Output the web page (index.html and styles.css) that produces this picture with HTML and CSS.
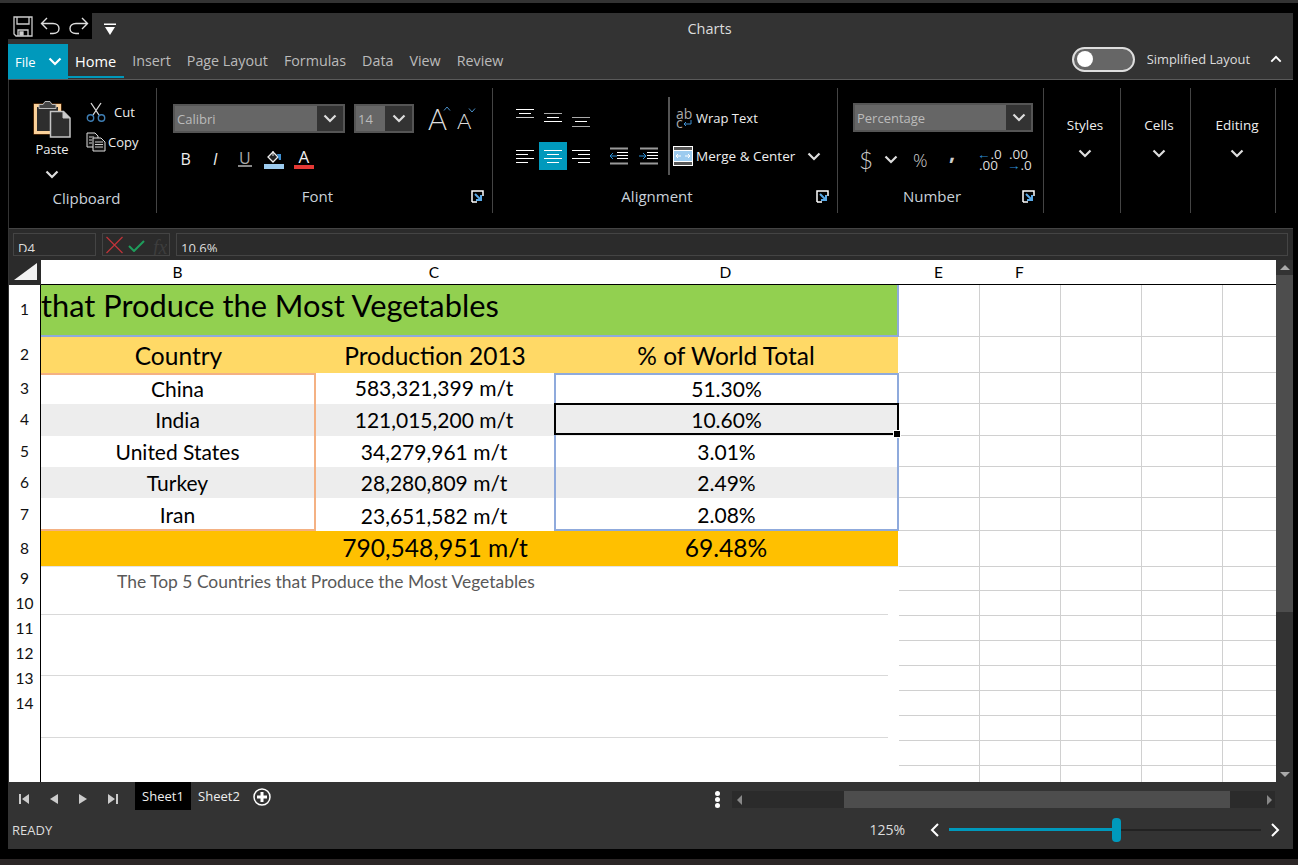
FILE: index.html
```html
<!DOCTYPE html>
<html lang="en">
<head>
  <meta charset="UTF-8">
  <title>Charts</title>
  <link rel="stylesheet" href="styles.css">
</head>
<body>
  <svg class="defs" width="0" height="0">
    <symbol id="chev" viewBox="0 0 14 9"><path d="M1.5 1.5 7 7l5.5-5.5" fill="none" stroke="currentColor" stroke-width="2.2"/></symbol>
    <symbol id="launcher" viewBox="0 0 13 13"><path d="M1 12V1h11v5M1 12h5" fill="none" stroke="#fff" stroke-width="1.5"/><path d="M4 4l5 5M10 5v5H5" fill="none" stroke="#5aa9e6" stroke-width="2"/></symbol>
  </svg>

  <div class="top-strip"></div>

  <div class="window">
    <div class="title-bar">
      <div class="qat">
        <svg class="qat-icon" width="20" height="21" viewBox="0 0 20 21" fill="none" stroke="#ccc" stroke-width="1.3"><path d="M1 1h18v19H3l-2-2z"/><path d="M4 1v7h12V1M5 20v-6h10v6"/><path d="M7 16h3v3H7z" fill="#ccc"/></svg>
        <svg class="qat-icon" width="21" height="18" viewBox="0 0 21 18" fill="none" stroke="#ddd" stroke-width="1.4"><path d="M7 1 1.5 6.5 7 12M2 6.5h11c4 0 6 2.500 6 5s-2 5-6 5H10"/></svg>
        <svg class="qat-icon" width="21" height="18" viewBox="0 0 21 18" fill="none" stroke="#ddd" stroke-width="1.4"><path d="M14 1l5.500 5.500L14 12M19 6.500H8c-4 0-6 2.500-6 5s2 5 6 5h3"/></svg>
      </div>
      <svg class="qat-more" width="12" height="12" viewBox="0 0 12 12"><path d="M0 .5h12V2H0zM1 4h10l-5 8z" fill="#fff"/></svg>
      <div class="doc-title">Charts</div>
    </div>

    <div class="tab-bar">
      <div class="file-tab">File <svg class="chev"><use href="#chev"/></svg></div>
      <a class="tab tab-active">Home</a>
      <a class="tab">Insert</a>
      <a class="tab">Page Layout</a>
      <a class="tab">Formulas</a>
      <a class="tab">Data</a>
      <a class="tab">View</a>
      <a class="tab">Review</a>
      <div class="layout-switch">
        <span class="toggle"><span class="knob"></span></span>
        <span class="switch-label">Simplified Layout</span>
        <svg class="chev chev-up"><use href="#chev"/></svg>
      </div>
    </div>

    <div class="ribbon">
      <section class="group group-clipboard">
        <div class="clipboard-body">
          <div class="paste">
            <svg width="38" height="38" viewBox="0 0 38 38">
              <rect x=".5" y="3.500" width="28" height="31" fill="#8a4b12"/>
              <rect x="2.500" y="5.500" width="24" height="27" fill="#2e2e2e" stroke="#fbd19a" stroke-width="3"/>
              <path d="M6 4.500h4l2-3h5l2 3h4v4H6z" fill="#444" stroke="#bbb"/>
              <path d="M17.500 11.500h13l6.500 6.500v19H17.500z" fill="#2e2e2e" stroke="#c4c4c4" stroke-width="1.500"/>
              <path d="M30 11.500V18h7" fill="#ccc" stroke="#c4c4c4"/>
            </svg>
            <span class="paste-label">Paste</span>
            <svg class="chev"><use href="#chev"/></svg>
          </div>
          <div class="cut-copy">
            <div class="cmd cmd-cut">
              <svg width="20" height="20" viewBox="0 0 20 20" fill="none"><path d="M5 1l8 12M15 1 7 13" stroke="#ddd" stroke-width="1.300"/><circle cx="4.500" cy="16" r="3.200" stroke="#3f7fb5" stroke-width="1.400"/><circle cx="15.500" cy="16" r="3.200" stroke="#3f7fb5" stroke-width="1.400"/></svg>
              <span>Cut</span>
            </div>
            <div class="cmd cmd-copy">
              <svg width="20" height="20" viewBox="0 0 20 20"><path d="M1 1h8l3 3v11H1z" fill="#111" stroke="#ddd"/><path d="M7 6h8l4 4v9H7z" fill="#111" stroke="#ddd"/><path d="M3 5h5M3 8h3M3 11h3M9 10h8M9 12.500h8M9 15h8" stroke="#ccc"/></svg>
              <span>Copy</span>
            </div>
          </div>
        </div>
        <div class="group-label label-clipboard"><span>Clipboard</span></div>
      </section>

      <section class="group group-font">
        <div class="row select-row">
          <div class="select select-font"><span class="select-value">Calibri</span><span class="select-arrow"><svg class="chev"><use href="#chev"/></svg></span></div>
          <div class="select select-size"><span class="select-value">14</span><span class="select-arrow"><svg class="chev"><use href="#chev"/></svg></span></div>
          <span class="grow-a">A<svg width="8" height="5" viewBox="0 0 8 5"><path d="M1 4.500 4 1l3 3.500" fill="none" stroke="#4a90c8"/></svg></span>
          <span class="shrink-a">A<svg width="8" height="5" viewBox="0 0 8 5"><path d="M1 .5 4 4 7 .5" fill="none" stroke="#4a90c8"/></svg></span>
        </div>
        <div class="row format-row">
          <span class="fmt">B</span>
          <span class="fmt fmt-italic">I</span>
          <span class="fmt fmt-under">U</span>
          <span class="fmt">
            <svg width="20" height="22" viewBox="0 0 20 22"><path d="M9 4l5 5-5 5-5-5z" fill="#222" stroke="#eee" stroke-width="1.300"/><path d="M9 3v5" stroke="#eee"/><path d="M13 6h4v6h-2z" fill="#3f8fd0"/><path d="M0 16h20v5H0z" fill="#9ccbef"/></svg>
          </span>
          <span class="fmt fmt-color">A</span>
        </div>
        <div class="group-label label-font"><span>Font</span><svg class="launcher"><use href="#launcher"/></svg></div>
      </section>

      <section class="group group-align">
        <div class="align-body">
          <div class="align-grid">
            <span class="slot"><svg width="18" height="28" viewBox="0 0 18 28" stroke="#fff"><path d="M0 9.500h18M3 13.500h12"/><path d="M0 17.500h18" stroke="#ccc"/></svg></span>
            <span class="slot"><svg width="18" height="28" viewBox="0 0 18 28" stroke="#fff"><path d="M0 13.500h18" stroke="#aaa"/><path d="M3 17.500h12"/><path d="M0 21.500h18"/></svg></span>
            <span class="slot"><svg width="18" height="28" viewBox="0 0 18 28" stroke="#fff"><path d="M0 17.500h18" stroke="#aaa"/><path d="M3 21.500h12"/><path d="M0 26.500h18" stroke="#aaa"/></svg></span>
            <span class="slot slot-gap"></span>
            <span class="slot"><svg width="18" height="28" viewBox="0 0 18 28" stroke="#fff"><path d="M0 8.500h18M0 12.500h12M0 16.500h18M0 20.500h12"/></svg></span>
            <span class="slot slot-on"><svg width="18" height="28" viewBox="0 0 18 28" stroke="#fff"><path d="M0 8.500h18M3 12.500h12M0 16.500h18M3 20.500h12"/></svg></span>
            <span class="slot"><svg width="18" height="28" viewBox="0 0 18 28" stroke="#fff"><path d="M0 8.500h18M6 12.500h12M0 16.500h18M6 20.500h12"/></svg></span>
            <span class="indents">
              <svg width="20" height="18" viewBox="0 0 20 18"><path d="M1 1.500h18M1 16.500h18" stroke="#999" stroke-width="2"/><path d="M8 5.500h11M8 8.500h11M8 11.500h11" stroke="#fff"/><path d="M8 9H1M4 6 1 9l3 3" fill="none" stroke="#2b8fd6"/></svg>
              <svg width="20" height="18" viewBox="0 0 20 18"><path d="M1 1.500h18M1 16.500h18" stroke="#999" stroke-width="2"/><path d="M8 5.500h11M8 8.500h11M8 11.500h11" stroke="#fff"/><path d="M0 9h7M4 6l3 3-3 3" fill="none" stroke="#2b8fd6"/></svg>
            </span>
          </div>
          <div class="wrap-merge">
            <div class="cmd cmd-wrap">
              <span class="wrap-glyph">ab<br>c<svg width="9" height="8" viewBox="0 0 9 8"><path d="M8 0v4H1M3 2 1 4l2 2" fill="none" stroke="#3f8fd0"/></svg></span>
              <span>Wrap Text</span>
            </div>
            <div class="cmd cmd-merge">
              <svg width="20" height="20" viewBox="0 0 20 20"><path d="M0 0h20v20H0z" fill="#555"/><path d="M1 5h18v10H1z" fill="#9ccbef"/><path d="M0 .5h20M0 19.500h20M.5 0v20M19.500 0v20M0 4.500h20M0 15.500h20" stroke="#fff"/><path d="M3 10h5M5 8l-2 2 2 2M12 10h5M15 8l2 2-2 2" fill="none" stroke="#fff"/></svg>
              <span>Merge &amp; Center</span>
              <svg class="chev"><use href="#chev"/></svg>
            </div>
          </div>
        </div>
        <div class="group-label label-align"><span>Alignment</span><svg class="launcher"><use href="#launcher"/></svg></div>
      </section>

      <section class="group group-number">
        <div class="select select-number"><span class="select-value">Percentage</span><span class="select-arrow"><svg class="chev"><use href="#chev"/></svg></span></div>
        <div class="row number-row">
          <span class="currency">$</span>
          <svg class="chev"><use href="#chev"/></svg>
          <span class="percent">%</span>
          <span class="comma">,</span>
          <span class="decimals dec-more"><i>←</i>.0<br>.00</span>
          <span class="decimals dec-less">.00<br><i>→</i>.0</span>
        </div>
        <div class="group-label label-number"><span>Number</span><svg class="launcher"><use href="#launcher"/></svg></div>
      </section>

      <section class="group group-menu group-styles"><span>Styles</span><svg class="chev"><use href="#chev"/></svg></section>
      <section class="group group-menu group-cells"><span>Cells</span><svg class="chev"><use href="#chev"/></svg></section>
      <section class="group group-menu group-editing"><span>Editing</span><svg class="chev"><use href="#chev"/></svg></section>
    </div>

    <div class="formula-bar">
      <div class="fbox name-box"><span>D4</span></div>
      <div class="fbox fx-box">
        <svg width="17" height="18" viewBox="0 0 17 18"><path d="M.5 1l16 16M16.500 1l-16 16" stroke="#c0343a" stroke-width="1.200"/></svg>
        <svg width="17" height="12" viewBox="0 0 17 12"><path d="M1 6l5 5L16 1" fill="none" stroke="#1f9d5c" stroke-width="2"/></svg>
        <span class="fx">fx</span>
      </div>
      <div class="fbox formula-input"><span>10.6%</span></div>
    </div>

    <div class="sheet-area">
      <div class="sheet">
        <table class="grid">
          <colgroup>
            <col class="col-hdr"><col class="col-b"><col class="col-c"><col class="col-d">
            <col class="col-x"><col class="col-x"><col class="col-x"><col class="col-x"><col class="col-x">
          </colgroup>
          <tr class="head">
            <th class="corner"><svg width="24" height="18" viewBox="0 0 24 18"><path d="M0 17 23 0v17z" fill="#f2f2f2"/></svg></th>
            <th>B</th><th>C</th><th>D</th><th>E</th><th>F</th><th></th><th></th><th></th>
          </tr>
          <tr class="r-title">
            <th>1</th><td colspan="3" class="title-cell">that Produce the Most Vegetables</td><td></td><td></td><td></td><td></td><td></td>
          </tr>
          <tr class="r-head">
            <th>2</th><td class="hd">Country</td><td class="hd">Production 2013</td><td class="hd hd-end">% of World Total</td><td></td><td></td><td></td><td></td><td></td>
          </tr>
          <tr class="r3 first">
            <th>3</th><td class="ref-o">China</td><td class="val">583,321,399 m/t</td><td class="ref-b">51.30%</td><td></td><td></td><td></td><td></td><td></td>
          </tr>
          <tr class="r4 alt">
            <th>4</th><td class="ref-o">India</td><td class="val">121,015,200 m/t</td><td class="ref-b">10.60%</td><td></td><td></td><td></td><td></td><td></td>
          </tr>
          <tr class="r5">
            <th>5</th><td class="ref-o">United States</td><td class="val">34,279,961 m/t</td><td class="ref-b">3.01%</td><td></td><td></td><td></td><td></td><td></td>
          </tr>
          <tr class="r6 alt">
            <th>6</th><td class="ref-o">Turkey</td><td class="val">28,280,809 m/t</td><td class="ref-b">2.49%</td><td></td><td></td><td></td><td></td><td></td>
          </tr>
          <tr class="r7 last">
            <th>7</th><td class="ref-o">Iran</td><td class="val">23,651,582 m/t</td><td class="ref-b">2.08%</td><td></td><td></td><td></td><td></td><td></td>
          </tr>
          <tr class="r-total">
            <th>8</th><td class="tot"></td><td class="tot">790,548,951 m/t</td><td class="tot tot-end">69.48%</td><td></td><td></td><td></td><td></td><td></td>
          </tr>
          <tr class="r r9"><th>9</th><td></td><td></td><td></td><td></td><td></td><td></td><td></td><td></td></tr>
          <tr class="r"><th>10</th><td></td><td></td><td></td><td></td><td></td><td></td><td></td><td></td></tr>
          <tr class="r"><th>11</th><td></td><td></td><td></td><td></td><td></td><td></td><td></td><td></td></tr>
          <tr class="r"><th>12</th><td></td><td></td><td></td><td></td><td></td><td></td><td></td><td></td></tr>
          <tr class="r"><th>13</th><td></td><td></td><td></td><td></td><td></td><td></td><td></td><td></td></tr>
          <tr class="r"><th>14</th><td></td><td></td><td></td><td></td><td></td><td></td><td></td><td></td></tr>
          <tr class="r"><th></th><td></td><td></td><td></td><td></td><td></td><td></td><td></td><td></td></tr>
          <tr class="r"><th></th><td></td><td></td><td></td><td></td><td></td><td></td><td></td><td></td></tr>
          <tr class="r"><th></th><td></td><td></td><td></td><td></td><td></td><td></td><td></td><td></td></tr>
        </table>

        <div class="selection"><span class="handle"></span></div>

        <div class="chart">
          <div class="chart-title">The Top 5 Countries that Produce the Most Vegetables</div>
          <div class="chart-line line-first"></div>
          <div class="chart-line line-second"></div>
          <div class="chart-line"></div>
        </div>
      </div>

      <div class="vscroll">
        <span class="vbtn"><svg width="10" height="5" viewBox="0 0 10 5"><path d="M5 0l5 5H0z" fill="#aaa"/></svg></span>
        <span class="vthumb"></span>
        <span class="vtrack"></span>
        <span class="vbtn"><svg width="10" height="5" viewBox="0 0 10 5"><path d="M0 0h10L5 5z" fill="#aaa"/></svg></span>
      </div>
    </div>

    <div class="footer">
      <div class="sheet-row">
        <div class="sheet-nav">
          <svg width="10" height="10" viewBox="0 0 10 10"><path d="M0 0h2v10H0zM10 0v10L3 5z" fill="#ccc"/></svg>
          <svg width="8" height="10" viewBox="0 0 8 10"><path d="M8 0v10L0 5z" fill="#ccc"/></svg>
          <svg width="8" height="10" viewBox="0 0 8 10"><path d="M0 0v10l8-5z" fill="#ccc"/></svg>
          <svg width="10" height="10" viewBox="0 0 10 10"><path d="M8 0h2v10H8zM0 0v10l7-5z" fill="#ccc"/></svg>
        </div>
        <span class="sheet-tab sheet-tab-on">Sheet1</span>
        <span class="sheet-tab">Sheet2</span>
        <svg class="add-sheet" width="18" height="18" viewBox="0 0 18 18"><circle cx="9" cy="9" r="8" fill="none" stroke="#fff" stroke-width="1.500"/><path d="M9 4v10M4 9h10" stroke="#fff" stroke-width="3"/></svg>
        <span class="dots"><i></i><i></i><i></i></span>
        <div class="hscroll">
          <span class="hbtn"><svg width="5" height="10" viewBox="0 0 5 10"><path d="M5 0v10L0 5z" fill="#888"/></svg></span>
          <span class="hthumb"></span>
          <span class="hbtn hbtn-right"><svg width="5" height="10" viewBox="0 0 5 10"><path d="M0 0v10l5-5z" fill="#888"/></svg></span>
        </div>
      </div>
      <div class="status-row">
        <span class="status">READY</span>
        <span class="zoom-pct">125%</span>
        <svg class="zoom-arrow" width="9" height="14" viewBox="0 0 9 14"><path d="M8 1 2 7l6 6" fill="none" stroke="#fff" stroke-width="2"/></svg>
        <div class="slider"><span class="slider-fill"></span><span class="slider-thumb"></span><span class="slider-rest"></span></div>
        <svg class="zoom-arrow" width="9" height="14" viewBox="0 0 9 14"><path d="M1 1l6 6-6 6" fill="none" stroke="#fff" stroke-width="2"/></svg>
      </div>
    </div>
  </div>

  <div class="bottom-strip"></div>
</body>
</html>
```

FILE: styles.css
```css
html, body {
  margin: 0;
  height: 100%;
  overflow: hidden;
}
body {
  background-color: #000;
  color: #eee;
  font-family: "Open Sans", "Noto Sans", sans-serif;
  font-size: 13px;
}
.defs {
  position: absolute;
}
.chev {
  display: block;
  width: 14px;
  height: 9px;
  color: #ddd;
  flex: none;
}
.top-strip {
  height: 3px;
  background-color: #333;
}
.bottom-strip {
  height: 6px;
  margin-top: 10px;
  background-color: #2b2626;
}
.window {
  margin: 10px 5px 0 8px;
  height: 836px;
  border-left: 1px solid #333;
  display: flex;
  flex-direction: column;
}

/* title bar */
.title-bar {
  height: 31px;
  margin-left: -1px;
  background-color: #333;
  display: flex;
  align-items: flex-start;
}
.qat {
  width: 84px;
  height: 26px;
  background-color: #000;
  display: flex;
  align-items: center;
  gap: 7px;
  padding-left: 5px;
  box-sizing: border-box;
}
.qat-more {
  margin: 10px 0 0 12px;
}
.doc-title {
  flex: 1;
  padding: 7px 0 0 10px;
  text-align: center;
  font-size: 14.500px;
  line-height: 18px;
  color: #ddd;
}

/* tabs */
.tab-bar {
  height: 35px;
  margin-left: -1px;
  background-color: #333;
  border-bottom: 1px solid #5a5a5a;
  display: flex;
  align-items: stretch;
  padding-right: 11px;
}
.file-tab {
  width: 60px;
  box-sizing: border-box;
  background-color: #0099bc;
  color: #fff;
  display: flex;
  align-items: center;
  gap: 12px;
  padding-left: 7px;
  font-size: 13px;
}
.file-tab .chev {
  color: #fff;
}
.tab {
  padding: 0 8px;
  line-height: 34px;
  font-size: 14.300px;
  color: #bbb;
}
.tab-active {
  color: #fff;
  font-size: 14.600px;
  border-bottom: 2px solid #0099bc;
  height: 34px;
  box-sizing: border-box;
  padding: 0 8px 0 7px;
  margin-bottom: -1px;
}
.layout-switch {
  margin-left: auto;
  display: flex;
  align-items: center;
  height: 30px;
}
.toggle {
  width: 63px;
  height: 25px;
  box-sizing: border-box;
  background-color: #666;
  border: 2px solid #ddd;
  border-radius: 13px;
  display: flex;
  align-items: center;
  padding-left: 3px;
}
.knob {
  width: 16px;
  height: 16px;
  border-radius: 50%;
  background-color: #fff;
}
.switch-label {
  margin-left: 12px;
  font-size: 12.900px;
  color: #ddd;
}
.chev-up {
  margin-left: 20px;
  transform: rotate(180deg);
  width: 12px;
  height: 8px;
  color: #fff;
}

/* ribbon */
.ribbon {
  height: 140px;
  padding-top: 8px;
  background-color: #000;
  border-bottom: 1px solid #444;
  display: flex;
  align-items: flex-start;
}
.group {
  height: 125px;
  box-sizing: border-box;
  border-right: 1px solid #444;
  display: flex;
  flex-direction: column;
  flex: none;
}
.group-label {
  margin-top: auto;
  padding: 0 8px 8px 0;
  display: grid;
  grid-template-columns: 1fr auto 1fr;
  align-items: center;
  font-size: 15px;
  line-height: 18px;
  color: #c9d1d9;
}
.group-label span {
  grid-column: 2;
}
.label-font span {
  margin-right: 22px;
}
.label-align span {
  margin-right: 8px;
}
.label-number span {
  margin-right: 24px;
}
.launcher {
  grid-column: 3;
  justify-self: end;
  width: 13px;
  height: 13px;
}
.row {
  display: flex;
  align-items: center;
}

.group-clipboard {
  width: 148px;
}
.clipboard-body {
  display: flex;
  padding: 12px 0 0 24px;
}
.paste {
  width: 38px;
  display: flex;
  flex-direction: column;
  align-items: center;
}
.paste-label {
  margin-top: 2px;
  line-height: 18px;
  font-size: 13px;
}
.paste .chev {
  margin-top: 12px;
}
.cut-copy {
  margin-left: 15px;
  padding-top: 2px;
  display: flex;
  flex-direction: column;
  gap: 10px;
}
.cmd {
  display: flex;
  align-items: center;
  white-space: nowrap;
  font-size: 13px;
}
.cmd-cut span {
  margin-left: 8px;
}
.cmd-copy span {
  margin-left: 2px;
}
.label-clipboard {
  padding: 0 0 6px 8px;
}

.group-font {
  width: 336px;
  padding-left: 16px;
}
.select-row {
  margin-top: 16px;
  gap: 9px;
}
.select {
  height: 29px;
  box-sizing: border-box;
  border: 2px solid #555;
  background-color: #333;
  display: flex;
}
.select-value {
  flex: 1;
  background-color: #666;
  padding-left: 2px;
  font-size: 13px;
  line-height: 27px;
  color: #bbb;
}
.select-arrow {
  display: flex;
  align-items: center;
  justify-content: center;
}
.select-font {
  width: 172px;
}
.select-font .select-arrow {
  width: 26px;
}
.select-size {
  width: 60px;
}
.select-size .select-arrow {
  width: 27px;
}
.grow-a,
.shrink-a {
  font-family: Lato, sans-serif;
  font-weight: 300;
  color: #ddd;
  display: flex;
  align-items: flex-start;
  line-height: 1;
}
.grow-a {
  font-size: 29px;
  margin-left: 5px;
}
.grow-a svg {
  margin: 2px 0 0 -4px;
}
.shrink-a {
  font-size: 22px;
  margin-left: -3px;
  padding-top: 5px;
}
.shrink-a svg {
  margin: -2px 0 0 -3px;
}
.format-row {
  margin: 15px 0 0 -2px;
}
.fmt {
  width: 29.500px;
  height: 22px;
  display: flex;
  align-items: center;
  justify-content: center;
  font-size: 16px;
}
.fmt-italic {
  font-style: italic;
}
.fmt-under {
  color: #aaa;
  align-items: flex-start;
  line-height: 20px;
  background: linear-gradient(#888, #888) center 17px / 14px 2px no-repeat;
}
.fmt-color {
  align-items: flex-start;
  font-size: 17px;
  line-height: 17px;
  background: linear-gradient(#e53935, #e53935) center 17px / 20px 4px no-repeat;
}

.group-align {
  width: 345px;
}
.align-body {
  display: flex;
  margin-top: 9px;
}
.align-grid {
  width: 157px;
  padding: 3px 0 0 18px;
  display: flex;
  flex-wrap: wrap;
  row-gap: 14px;
  align-content: flex-start;
}
.slot {
  width: 28px;
  height: 28px;
  display: flex;
  justify-content: center;
}
.slot-gap {
  width: 73px;
}
.slot-on {
  background-color: #0099bc;
}
.indents {
  margin-left: 14px;
  width: 50px;
  display: flex;
  justify-content: space-between;
  align-items: center;
  height: 28px;
}
.wrap-merge {
  height: 78px;
  box-sizing: border-box;
  border-left: 2px solid #555;
  padding: 9px 0 0 3px;
  display: flex;
  flex-direction: column;
  gap: 14px;
}
.cmd-wrap,
.cmd-merge {
  height: 24px;
}
.cmd-wrap span:last-child {
  margin-left: 3px;
}
.wrap-glyph {
  width: 20px;
  box-sizing: border-box;
  padding-left: 3px;
  font-size: 14px;
  line-height: 9px;
  color: #aaa;
}
.cmd-merge > span {
  margin-left: 3px;
  font-size: 13.500px;
}
.cmd-merge .chev {
  margin-left: 12px;
}

.group-number {
  width: 206px;
  padding-left: 15px;
}
.select-number {
  width: 180px;
  margin-top: 15px;
}
.select-number .select-arrow {
  width: 25px;
}
.number-row {
  margin-top: 14px;
  height: 27px;
  color: #ccc;
}
.currency {
  width: 14px;
  margin-left: 6px;
  font-family: Lato, sans-serif;
  font-weight: 300;
  font-size: 24px;
}
.number-row .chev {
  margin-left: 11px;
}
.percent {
  margin-left: 15px;
  width: 18px;
  font-size: 18px;
  font-weight: 300;
}
.comma {
  margin: 0 0 18px 18px;
  width: 10px;
  font-size: 22px;
  font-weight: 700;
  line-height: 16px;
}
.decimals {
  font-size: 13.500px;
  line-height: 11px;
  text-align: right;
  width: 21px;
  color: #ddd;
}
.decimals i {
  font-style: normal;
  color: #2b8fd6;
}
.dec-more {
  margin-left: 18px;
}
.dec-less {
  margin-left: 9px;
}
.group-menu {
  align-items: center;
  padding-top: 28px;
  font-size: 13.500px;
  line-height: 18px;
}
.group-menu .chev {
  margin-top: 15px;
}
.group-styles {
  width: 77px;
  padding-left: 6px;
}
.group-cells {
  width: 70px;
  padding-left: 7px;
}
.group-editing {
  width: 85px;
  padding-left: 8px;
}

/* formula bar */
.formula-bar {
  height: 31px;
  padding: 4px 5px 0 4px;
  box-sizing: border-box;
  background-color: #2b2b2b;
  display: flex;
  gap: 6px;
}
.fbox {
  height: 23px;
  box-sizing: border-box;
  border: 1px solid #444;
  overflow: hidden;
  font-size: 13px;
  line-height: 16px;
  color: #ddd;
  padding: 6px 0 0 4px;
}
.fbox span {
  display: block;
  height: 12px;
  overflow: hidden;
}
.name-box {
  width: 83px;
}
.fx-box {
  width: 68px;
  display: flex;
  align-items: center;
  gap: 5px;
  padding: 0 0 0 3px;
}
.fx-box svg:nth-child(2) {
  margin-top: 2px;
}
.fx-box .fx {
  height: auto;
  margin: 4px 0 0 3px;
  font-family: "Liberation Serif", serif;
  font-style: italic;
  font-size: 20px;
  color: #3d3d3d;
}
.formula-input {
  flex: 1;
}

/* sheet */
.sheet-area {
  height: 522px;
  display: flex;
}
.sheet {
  width: 1267px;
  position: relative;
  overflow: hidden;
  background-color: #fff;
  color: #000;
}
.grid {
  width: 1295px;
  table-layout: fixed;
  border-collapse: separate;
  border-spacing: 0;
  font-family: Lato, "Liberation Sans", sans-serif;
}
.col-hdr { width: 32px; }
.col-b { width: 275px; }
.col-c { width: 238px; }
.col-d { width: 345px; }
.col-x { width: 81px; }
.grid th,
.grid td {
  padding: 0;
  box-sizing: border-box;
  line-height: 1;
  text-align: center;
  white-space: nowrap;
  overflow: hidden;
}
.grid th {
  font-weight: 400;
  font-size: 15.500px;
}
.grid tr th:first-child {
  border-right: 1px solid #000;
  color: #111;
}
.head {
  height: 25px;
}
.head th {
  border-bottom: 1px solid #000;
  padding: 1px 2px 0 0;
}
.grid .head .corner {
  background-color: #2b2b2b;
  border-right: 0;
  border-bottom: 0;
  text-align: left;
  vertical-align: top;
  padding: 3px 0 0 5px;
}
.corner svg {
  display: block;
}
.grid td:empty {
  border-right: 1px solid #d0d0d0;
  border-bottom: 1px solid #d0d0d0;
}
.r-title { height: 52px; }
.r-head { height: 36px; }
.r3 { height: 31px; }
.r4 { height: 32px; }
.r5 { height: 31px; }
.r6 { height: 31px; }
.r7 { height: 33px; }
.r-total { height: 36px; }
.r { height: 25px; }
.r9 { height: 24px; }

.grid .title-cell {
  background-color: #92d050;
  border-right: 2px solid #8faadc;
  border-bottom: 2px solid #8faadc;
  font-size: 30.800px;
  text-align: left;
  padding-bottom: 7px;
}
.r-title th {
  padding-bottom: 2px;
}
.grid .hd {
  background-color: #ffd966;
  font-size: 24.500px;
  padding-top: 3px;
}
.grid .hd-end,
.grid .tot-end {
  border-right: 1px solid #fff;
}
.r3 td, .r4 td, .r5 td, .r6 td, .r7 td {
  font-size: 21px;
}
.r3 td, .r4 td {
  padding-bottom: 2px;
}
.r7 td {
  padding-top: 1px;
}
.grid .val {
  padding-right: 2px;
}
.grid .ref-o {
  border-right: 2px solid #f4b183;
}
.first .ref-o {
  border-top: 2px solid #f4b183;
}
.last .ref-o {
  border-bottom: 2px solid #f4b183;
}
.grid .ref-b {
  border-left: 2px solid #8faadc;
  border-right: 2px solid #8faadc;
}
.first .ref-b {
  border-top: 2px solid #8faadc;
}
.last .ref-b {
  border-bottom: 2px solid #8faadc;
}
.alt td:not(:empty) {
  background-color: #ededed;
}
.grid .tot {
  background-color: #ffc000;
  font-size: 24.600px;
  border-bottom: 1px solid #e4e4e4;
}
.grid .tot:empty {
  border-right: 0;
  border-bottom: 1px solid #e4e4e4;
}
.selection {
  position: absolute;
  left: 545px;
  top: 143px;
  width: 345px;
  height: 32px;
  box-sizing: border-box;
  border: 2px solid #000;
}
.handle {
  position: absolute;
  right: -4px;
  bottom: -5px;
  width: 6px;
  height: 6px;
  background-color: #000;
  border: 1px solid #fff;
}
.chart {
  position: absolute;
  left: 32px;
  top: 307px;
  width: 858px;
  bottom: 0;
  background-color: #fff;
  overflow: hidden;
}
.chart-title {
  height: 29px;
  padding: 5px 0 0 76px;
  box-sizing: border-box;
  font-family: Lato, sans-serif;
  font-size: 17.450px;
  line-height: 20px;
  color: #595959;
}
.chart-line {
  width: 847px;
  height: 62px;
  box-sizing: border-box;
  border-bottom: 1px solid #d9d9d9;
}
.line-first {
  height: 19px;
}
.line-second {
  height: 61px;
}

.vscroll {
  width: 17px;
  display: flex;
  flex-direction: column;
  background-color: #333;
}
.vbtn {
  height: 15px;
  display: flex;
  align-items: center;
  justify-content: center;
  flex: none;
}
.vthumb {
  height: 337px;
  background-color: #4d4d4d;
  flex: none;
}
.vtrack {
  flex: 1;
}

/* footer */
.footer {
  height: 67px;
  background-color: #333;
  display: flex;
  flex-direction: column;
}
.sheet-row {
  height: 28px;
  display: flex;
  align-items: flex-start;
  padding-right: 18px;
}
.sheet-nav {
  width: 126px;
  box-sizing: border-box;
  padding: 12px 17px 0 10px;
  display: flex;
  justify-content: space-between;
}
.sheet-tab {
  width: 56px;
  height: 28px;
  line-height: 28px;
  text-align: center;
  font-size: 13px;
}
.sheet-tab-on {
  background-color: #000;
}
.add-sheet {
  margin: 6px 0 0 6px;
}
.dots {
  margin: 9px 0 0 auto;
  display: flex;
  flex-direction: column;
  gap: 1px;
}
.dots i {
  width: 5px;
  height: 5px;
  border-radius: 50%;
  background-color: #fff;
}
.hscroll {
  width: 543px;
  height: 17px;
  margin: 9px 0 0 12px;
  background-color: #2b2b2b;
  display: flex;
  align-items: center;
}
.hbtn {
  padding-left: 5px;
  display: flex;
}
.hthumb {
  width: 386px;
  height: 17px;
  margin-left: 102px;
  background-color: #4d4d4d;
}
.hbtn-right {
  margin-left: 32px;
}
.status-row {
  flex: 1;
  display: flex;
  align-items: center;
  padding: 0 13px 0 3px;
  font-size: 13px;
}
.status {
  color: #ddd;
}
.zoom-pct {
  margin: 0 25px 0 auto;
  font-size: 14px;
  color: #ddd;
}
.zoom-arrow {
  flex: none;
}
.slider {
  width: 312px;
  height: 24px;
  margin: 0 10px;
  display: flex;
  align-items: center;
}
.slider-fill {
  width: 163px;
  height: 3px;
  background-color: #0099bc;
}
.slider-thumb {
  width: 9px;
  height: 24px;
  border-radius: 4px;
  background-color: #0099bc;
}
.slider-rest {
  flex: 1;
  height: 2px;
  background-color: #222;
}
```
